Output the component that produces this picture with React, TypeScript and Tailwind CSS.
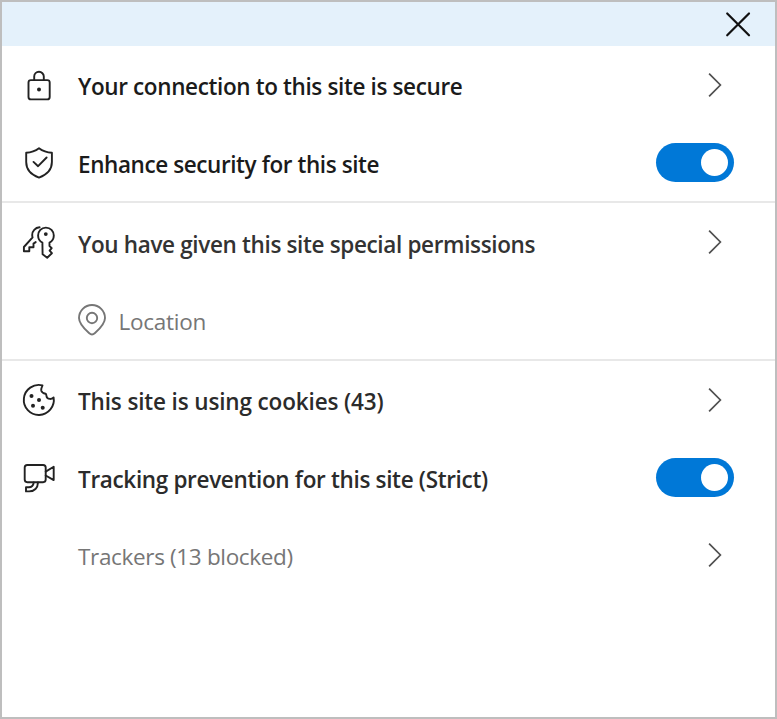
import type { ReactNode } from "react";

function Icon({ children }: { children: ReactNode }) {
  return (
    <svg
      className="h-10 w-10 shrink-0"
      viewBox="0 0 40 40"
      fill="none"
      stroke="currentColor"
      strokeWidth="1.9"
      strokeLinejoin="round"
      strokeLinecap="round"
    >
      {children}
    </svg>
  );
}

const LockIcon = () => (
  <Icon>
    <rect x="9.5" y="15.1" width="21.2" height="19.3" rx="2.4" />
    <path d="M15.2 15V11.600a4.800 4.800 0 0 1 9.600 0V15" />
    <circle cx="20" cy="24.500" r="2" fill="currentColor" stroke="none" />
  </Icon>
);

const ShieldIcon = () => (
  <Icon>
    <path d="M20 5.200C16.300 8 12 9.500 7.200 9.800V19c0 7.300 4.300 12.500 12.800 15.600 8.500-3.100 12.900-8.300 12.900-15.600V9.800C28 9.500 23.700 8 20 5.200Z" />
    <path d="m14.500 18.900 4.600 4.300 8.500-8.700" />
  </Icon>
);

const KeysIcon = () => (
  <Icon>
    <path d="M23.400 20.700C20.500 19.300 19.100 16.700 19.100 13.600 19.100 9 22.400 5.600 26.900 5.600s7.900 3.400 7.900 8c0 3.200-1.600 5.700-4.300 7.100v3.300l2.200 2.100-2.100 2.500 2.300 2.600-4.700 4.500-4.600-3.400Z" />
    <circle cx="26.800" cy="12.100" r="1.900" fill="currentColor" stroke="none" />
    <path d="M20.600 5.300c-4.500.4-7.400 3.700-7.400 7.600 0 .9.100 1.700.4 2.500L4.900 25v4.200h5.400V25.300h4.200v-3.700l2.200-1.500" />
  </Icon>
);

const PinIcon = () => (
  <Icon>
    <path d="M20 34.500c-1.100 0-2-.6-3-1.500C11.300 28 7 23.600 7 18a13 13 0 0 1 26 0c0 5.600-4.300 10-10 15-1 .9-1.900 1.500-3 1.500Z" />
    <circle cx="20" cy="18" r="5.200" />
  </Icon>
);

const CookieIcon = () => (
  <Icon>
    <path d="M23.500 5.400A15 15 0 1 0 34.600 17.400c-1.300 1.100-2.600 1.700-3.800 1.500-1.700-.1-3.100-1.100-3.300-2.800-.1-1.100-.2-2-1-2.400-2.100-.4-3.700-1.400-4.200-3-.5-1.800.3-3.100 1.200-5.300Z" />
    <g fill="currentColor" stroke="none">
      <circle cx="12.500" cy="16" r="2" />
      <circle cx="20" cy="20" r="2" />
      <circle cx="14" cy="25.700" r="2" />
      <circle cx="23.700" cy="27.700" r="2" />
    </g>
  </Icon>
);

const CameraIcon = () => (
  <Icon>
    <rect x="5.700" y="8" width="21" height="17.200" rx="2.600" />
    <path d="M26.700 14.600 34.700 9.800v13.300l-8-4.600M14.700 25.400c-.3 3.300-1.900 4.900-5 4.900H7v4.100h3.200c5.200 0 8.600-3.500 8.800-9" />
  </Icon>
);

const Chevron = () => (
  <svg
    className="mr-[50px] h-7 w-5 shrink-0 text-[#505050]"
    viewBox="0 0 20 28"
    fill="none"
    stroke="currentColor"
    strokeWidth="1.700"
  >
    <path d="m4.100 2.700 11.300 11.300L4.100 25.300" />
  </svg>
);

function Toggle() {
  return (
    <button
      role="switch"
      aria-checked="true"
      aria-label="On"
      className="mr-[41px] flex h-[39px] w-[78px] shrink-0 items-center justify-end rounded-full bg-[#0078d7] pr-1.5"
    >
      <span className="h-[27px] w-[27px] rounded-full bg-white" />
    </button>
  );
}

interface RowProps {
  icon?: ReactNode;
  label: string;
  className: string;
  end?: ReactNode;
}

function Row({ icon, label, className, end }: RowProps) {
  return (
    <div className="flex h-[77.700px] items-center pl-[17px]">
      <div className="mr-[19px] flex w-10 shrink-0 text-[#222]">{icon}</div>
      <span className={`mt-[5px] whitespace-nowrap leading-8 ${className}`}>{label}</span>
      <div className="ml-auto flex">{end}</div>
    </div>
  );
}

export default function App() {
  return (
    <main className="flex h-[719px] w-[777px] flex-col border-2 border-[#bebebe] bg-white font-['Open_Sans','Noto_Sans',sans-serif] text-[22.5px]">
      <header className="flex h-11 shrink-0 items-center justify-end bg-[#e4f1fb] pr-[23px]">
        <button aria-label="Close" className="text-[#111]">
          <svg className="h-7 w-7" viewBox="0 0 28 28" fill="none" stroke="currentColor" strokeWidth="2.200" strokeLinecap="round">
            <path d="m3.200 3.500 21.800 21.800M25 3.500 3.200 25.300" />
          </svg>
        </button>
      </header>
      <section className="border-b-2 border-[#e8e8e8]">
        <Row icon={<LockIcon />} label="Your connection to this site is secure" className="font-semibold tracking-[-0.37px] text-[#1b1b1b]" end={<Chevron />} />
        <Row icon={<ShieldIcon />} label="Enhance security for this site" className="font-semibold tracking-[-0.41px] text-[#1b1b1b]" end={<Toggle />} />
      </section>
      <section className="border-b-2 border-[#e8e8e8]">
        <Row icon={<KeysIcon />} label="You have given this site special permissions" className="font-semibold tracking-[-0.35px] text-[#333]" end={<Chevron />} />
        <div className="flex h-[77.700px] items-center pl-[69.500px] text-[#767676]">
          <PinIcon />
          <span className="ml-[7px] mt-[5px] leading-8 tracking-[-0.27px]">Location</span>
        </div>
      </section>
      <section>
        <Row icon={<CookieIcon />} label="This site is using cookies (43)" className="font-semibold tracking-[-0.14px] text-[#2b2b2b]" end={<Chevron />} />
        <Row icon={<CameraIcon />} label="Tracking prevention for this site (Strict)" className="font-semibold tracking-[-0.33px] text-[#2b2b2b]" end={<Toggle />} />
        <Row label="Trackers (13 blocked)" className="tracking-[-0.34px] text-[#767676]" end={<Chevron />} />
      </section>
    </main>
  );
}
